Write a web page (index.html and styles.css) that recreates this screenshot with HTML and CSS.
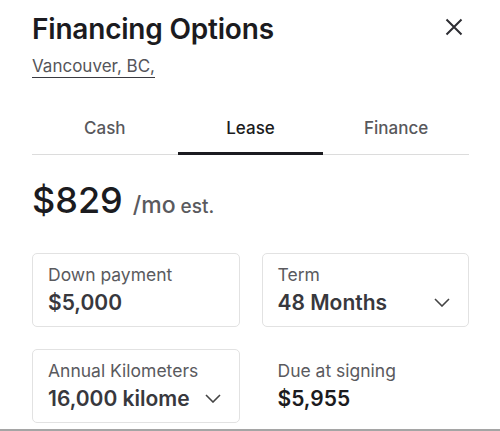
FILE: index.html
```html
<!DOCTYPE html>
<html lang="en">
<head>
    <meta charset="UTF-8">
    <meta name="viewport" content="width=device-width, initial-scale=1.0">
    <title>Financing Options</title>
    <link rel="stylesheet" href="styles.css">
</head>
<body>
    <div class="sheet">
        <div class="header">
            <div>
                <h1 class="titulo">Financing Options</h1>
                <a class="location" href="#">Vancouver, BC,</a>
            </div>
            <button class="close" aria-label="Close">
                <svg width="18" height="18" viewBox="0 0 18 18">
                    <path d="M1.5 1.5 L16.5 16.5 M16.5 1.5 L1.5 16.5" stroke="#2e2e33" stroke-width="2" fill="none"/>
                </svg>
            </button>
        </div>

        <!-- Tabs -->
        <div class="tabs">
            <div class="tab">Cash</div>
            <div class="tab active">Lease</div>
            <div class="tab">Finance</div>
        </div>

        <div class="price">
            <span class="amount">$829</span>
            <span class="per">/mo</span>
            <span class="est">est.</span>
        </div>

        <div class="opciones">
            <div class="box">
                <div class="label">Down payment</div>
                <div class="value">$5,000</div>
            </div>
            <div class="box">
                <div class="label">Term</div>
                <div class="value select">48 Months
                    <svg class="chevron" width="16" height="9" viewBox="0 0 16 9"><path d="M1 1 L8 8 L15 1" stroke="#444" stroke-width="1.6" fill="none"/></svg>
                </div>
            </div>
            <div class="box">
                <div class="label">Annual Kilometers</div>
                <div class="value select">16,000 kilome
                    <svg class="chevron" width="16" height="9" viewBox="0 0 16 9"><path d="M1 1 L8 8 L15 1" stroke="#444" stroke-width="1.6" fill="none"/></svg>
                </div>
            </div>
            <div class="box plain">
                <div class="label">Due at signing</div>
                <div class="value dark">$5,955</div>
            </div>
        </div>
    </div>
    <div class="bottom-line"></div>
</body>
</html>
```

FILE: styles.css
```css
body {
    margin: 0;
    font-family: Inter, "Noto Sans", Arial, sans-serif;
    background: #fff;
    color: #1b1b20;
}
.sheet {
    padding: 11px 31px 0 32px;
}
.header {
    display: flex;
    justify-content: space-between;
    align-items: flex-start;
}
.titulo {
    margin: 0;
    font-size: 28px;
    font-weight: 600;
    line-height: 36px;
    letter-spacing: -0.2px;
}
.location {
    display: inline-block;
    margin-top: 8px;
    font-size: 17px;
    line-height: 22px;
    color: #55555a;
    text-decoration: none;
    border-bottom: 1.5px solid #3a3a40;
}
.close {
    border: none;
    background: none;
    padding: 0;
    margin: 7px 6px 0 0;
    cursor: pointer;
}
.tabs {
    display: flex;
    margin-top: 39px;
    border-bottom: 1.5px solid #dcdcdc;
}
.tab {
    flex: 1;
    text-align: center;
    font-size: 17px;
    font-weight: 500;
    color: #58585c;
    line-height: 22px;
    padding-bottom: 13px;
    margin-bottom: -1.5px;
    border-bottom: 3px solid transparent;
}
.tab.active {
    color: #1b1b20;
    border-bottom-color: #1b1b20;
}
.price {
    margin-top: 23px;
    display: flex;
    align-items: baseline;
}
.amount {
    font-size: 36px;
    font-weight: 500;
    line-height: 44px;
}
.per {
    margin-left: 10px;
    font-size: 23px;
    font-weight: 500;
    color: #5a5a5e;
}
.est {
    margin-left: 5px;
    font-size: 19px;
    font-weight: 500;
    color: #5a5a5e;
}
.opciones {
    display: grid;
    grid-template-columns: 1fr 1fr;
    gap: 22px;
    margin-top: 31px;
}
.box {
    border: 1.5px solid #e2e2e2;
    border-radius: 5px;
    padding: 9px 15px 10px;
}
.box.plain {
    border-color: transparent;
}
.label {
    font-size: 17.5px;
    line-height: 24px;
    color: #5a5a5e;
}
.value {
    margin-top: 3px;
    font-size: 21px;
    font-weight: 600;
    line-height: 26px;
    color: #38383d;
}
.value.dark {
    color: #1b1b20;
}
.select {
    display: flex;
    justify-content: space-between;
    align-items: center;
}
.chevron {
    margin-right: 3px;
}
.bottom-line {
    position: absolute;
    left: 0;
    right: 0;
    top: 429px;
    border-top: 2px solid #a5a5a5;
}
```
